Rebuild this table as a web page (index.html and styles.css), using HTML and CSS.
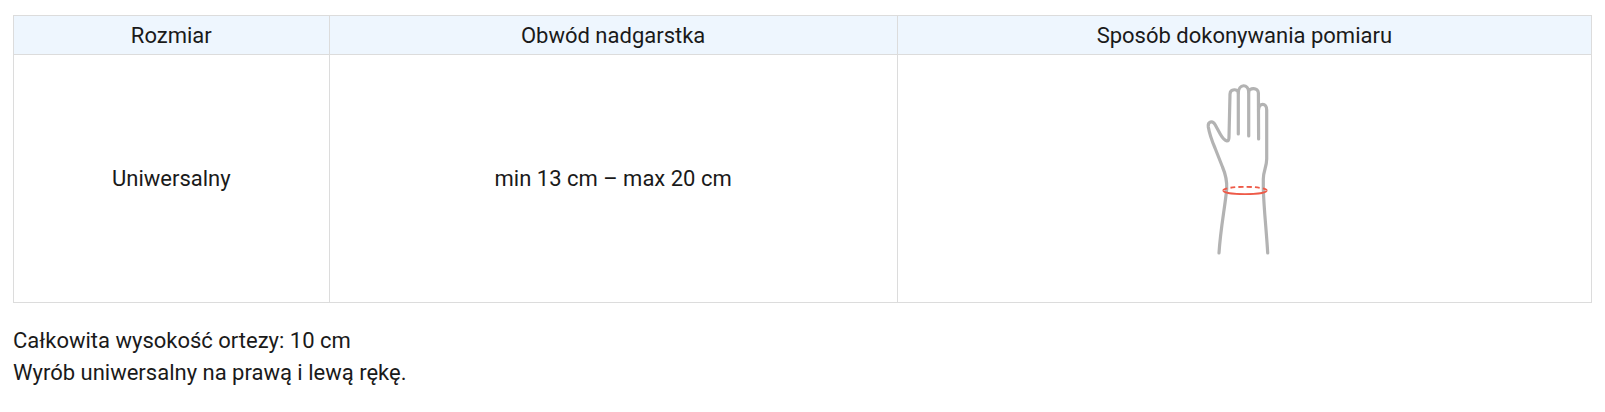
FILE: index.html
```html
<!DOCTYPE html>
<html lang="pl">
<head>
<meta charset="utf-8">
<title>Tabela rozmiarów</title>
<link rel="stylesheet" href="styles.css">
</head>
<body>
<div class="page">
  <table class="sizes">
    <colgroup>
      <col class="c1"><col class="c2"><col class="c3">
    </colgroup>
    <thead>
      <tr>
        <th>Rozmiar</th>
        <th>Obwód nadgarstka</th>
        <th>Sposób dokonywania pomiaru</th>
      </tr>
    </thead>
    <tbody>
      <tr>
        <td>Uniwersalny</td>
        <td>min 13 cm – max 20 cm</td>
        <td class="pic">
          <svg class="hand" width="80" height="200" viewBox="0 0 80 200" aria-hidden="true">
            <g fill="none" stroke="#b3b3b3" stroke-width="3.2" stroke-linecap="round" stroke-linejoin="round">
              <path d="M15,174 C16.5,150 21,128 22.7,110 C23.2,101 21.5,95 18.5,88 L11,69 C8,62 5.5,55 4.3,48 C3.6,42.5 8.5,41 11,45.5 L16.5,55.5 C18.5,59 21,61.5 23,62 C24.5,62 25,60 25,58 L26,15 C26.3,9.5 34.2,9.5 34.3,14 C34.5,4.5 44.5,4.5 44.7,13 C45,8 54.3,8.5 54.4,14 L54.6,60"/>
              <path d="M54.5,31 C55,23.5 62.7,23.5 62.7,31 L62.7,80 C62.7,88 59.3,92 59.3,100 L59.3,110 C60,132 62.5,152 63.7,174"/>
              <path d="M34.3,14 L34.3,55"/>
              <path d="M44.7,13 L44.7,57"/>
            </g>
            <g fill="none" stroke="#ee5a48" stroke-width="1.8">
              <path d="M19.3,111.5 A21.7,3.7 0 0 0 62.7,111.5"/>
              <path d="M19.3,111.5 A21.7,3.7 0 0 1 62.7,111.5" stroke-dasharray="5 3"/>
            </g>
          </svg>
        </td>
      </tr>
    </tbody>
  </table>
  <div class="notes">
    <p>Całkowita wysokość ortezy: 10 cm</p>
    <p>Wyrób uniwersalny na prawą i lewą rękę.</p>
  </div>
</div>
</body>
</html>
```
FILE: styles.css
```css
html, body {
  margin: 0;
  padding: 0;
  background: #ffffff;
}
body {
  font-family: Roboto, "Liberation Sans", Arial, sans-serif;
  color: #1a1a1a;
}
.page {
  padding: 15px 13px 0 13px;
}
.sizes {
  width: 100%;
  border-collapse: collapse;
  table-layout: fixed;
  font-size: 22px;
}
.c1 { width: 20%; }
.c2 { width: 36%; }
.c3 { width: 44%; }
.sizes th,
.sizes td {
  border: 1px solid #dcdcdc;
  text-align: center;
  vertical-align: middle;
  padding: 0 10px;
}
.sizes th {
  background: #eef6fe;
  font-weight: 400;
  height: 38px;
}
.sizes td {
  height: 247px;
}
.pic .hand {
  display: block;
  margin: 0 auto;
}
.notes {
  margin-top: 22px;
  font-size: 22px;
  line-height: 32px;
}
.notes p {
  margin: 0;
}
```
